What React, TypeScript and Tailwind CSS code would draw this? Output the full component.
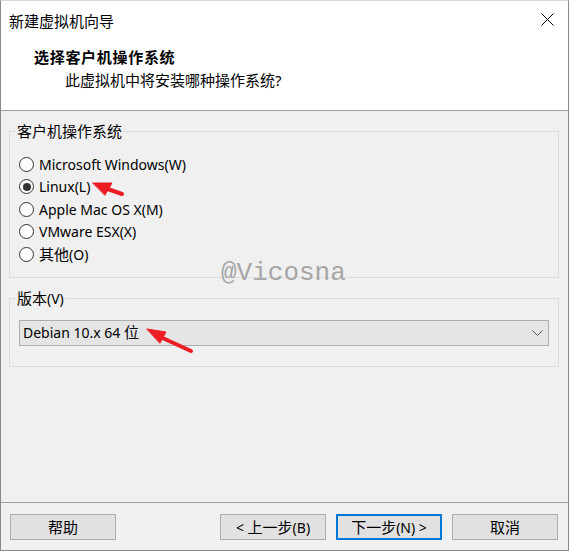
import React from "react";

const CJK = "font-['Segoe_UI','Noto_Sans','Noto_Sans_CJK_SC',sans-serif]";

function L({ children }: { children: React.ReactNode }) {
  return <span className="text-[14px]">{children}</span>;
}

function Radio({ label, checked }: { label: React.ReactNode; checked?: boolean }) {
  return (
    <div className="flex items-center h-[22.5px]">
      <div className="w-[15px] h-[15px] rounded-full border border-[#333333] bg-white flex items-center justify-center">
        {checked && <div className="w-[8px] h-[8px] rounded-full bg-[#333333]" />}
      </div>
      <span className="ml-[5px] text-[15px] leading-[20px] text-black">{label}</span>
    </div>
  );
}

function Button({ label, primary }: { label: React.ReactNode; primary?: boolean }) {
  return (
    <div
      className={
        "w-[106px] h-[26px] flex items-center justify-center bg-[#e1e1e1] text-[15px] text-black " +
        (primary ? "border-2 border-[#0078d7]" : "border border-[#adadad]")
      }
    >
      <span className="whitespace-pre">{label}</span>
    </div>
  );
}

export default function App() {
  return (
    <div className={"relative w-[570px] h-[551px] bg-white " + CJK}>
      <div className="w-[569px] h-[551px] flex flex-col border-l border-r border-b border-t border-l-[#8a8a8a] border-r-[#8a8a8a] border-b-[#8a8a8a] border-t-[#d4d4d4] bg-[#f0f0f0]">
        {/* Header */}
        <div className="h-[110px] bg-white border-b border-[#a0a0a0] flex flex-col shrink-0">
          <div className="h-[39px] flex items-center justify-between pl-[8px] pr-[14px]">
            <span className="text-[15px] leading-[20px] text-black">新建虚拟机向导</span>
            <svg width="13" height="13" viewBox="0 0 13 13" className="mt-[-2px]">
              <path d="M0.5 0.5 L12.5 12.5 M12.5 0.5 L0.5 12.5" stroke="#000" strokeWidth="1" fill="none" />
            </svg>
          </div>
          <div className="pl-[33px] mt-[7px] text-[15px] leading-[20px] font-bold text-black tracking-[0.7px]">
            选择客户机操作系统
          </div>
          <div className="pl-[64px] mt-[3px] text-[15px] leading-[20px] text-black">
            此虚拟机中将安装哪种操作系统?
          </div>
        </div>

        {/* Body */}
        <div className="flex-1 flex flex-col px-[8px]">
          <fieldset className="mt-[10px] w-[550px] border border-[#dcdcdc] px-[9px] pt-[12px] pb-[11px]">
            <legend className="ml-[-3px] px-[1px] text-[15px] leading-[20px] text-black">客户机操作系统</legend>
            <Radio label={<L>Microsoft Windows(W)</L>} />
            <Radio label={<L>Linux(L)</L>} checked />
            <Radio label={<L>Apple Mac OS X(M)</L>} />
            <Radio label={<L>VMware ESX(X)</L>} />
            <Radio label={<>其他<L>(O)</L></>} />
          </fieldset>

          <fieldset className="mt-[10px] w-[550px] border border-[#dcdcdc] px-[9px] pt-[11px] pb-[20px]">
            <legend className="ml-[-3px] px-[1px] text-[15px] leading-[20px] text-black">版本<L>(V)</L></legend>
            <div className="h-[26px] w-[530px] bg-[#e5e5e5] border border-[#adadad] flex items-center justify-between pl-[3px] pr-[5px]">
              <span className="text-[15px] leading-[20px] text-black whitespace-pre"><L>Debian 10.x 64 </L>位</span>
              <svg width="11" height="6" viewBox="0 0 11 6">
                <path d="M0.5 0.5 L5.5 5.5 L10.5 0.5" stroke="#555" strokeWidth="1" fill="none" />
              </svg>
            </div>
          </fieldset>
        </div>

        {/* Footer */}
        <div className="h-[48px] border-t border-[#a0a0a0] flex items-start pt-[11px] pl-[9px] shrink-0">
          <Button label="帮助" />
          <div className="ml-[104px] flex gap-[10px]">
            <Button label={<><L>&lt; </L>上一步<L>(B)</L></>} />
            <Button label={<>下一步<L>(N) &gt;</L></>} primary />
            <Button label="取消" />
          </div>
        </div>
      </div>

      {/* Watermark */}
      <div className="absolute left-[221px] top-[257px] text-[26px] leading-[32px] text-[#a6a6a6] font-['Liberation_Mono',monospace] pointer-events-none">
        @Vicosna
      </div>

      {/* Red arrows */}
      <svg className="absolute left-0 top-0 pointer-events-none" width="570" height="551" viewBox="0 0 570 551">
        <g fill="#ec1c24" stroke="#ec1c24" strokeLinecap="round">
          <line x1="122" y1="194" x2="102" y2="187" strokeWidth="4" />
          <polygon points="93,183 112,183 105,195" strokeWidth="1" />
          <line x1="191" y1="351" x2="156" y2="335" strokeWidth="4" />
          <polygon points="147,329 166,332 160,343" strokeWidth="1" />
        </g>
      </svg>
    </div>
  );
}
